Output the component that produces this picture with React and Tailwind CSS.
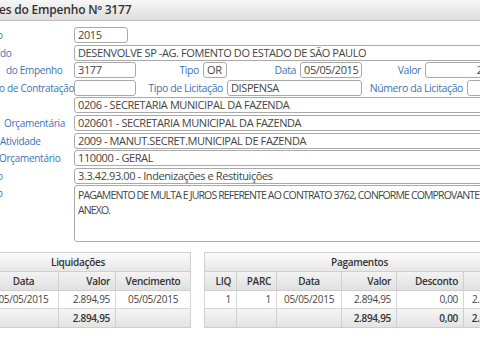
import React from "react";

const Campo = ({ w, children, right, className = "" }) => (
  <div
    className={`flex-none h-4 rounded-[3px] border border-[#a9a9a9] bg-white px-[3px] text-[11px] leading-[14px] tracking-[-0.4px] text-[#444] whitespace-nowrap overflow-hidden ${right ? "text-right" : ""} ${className}`}
    style={{ width: w }}
  >
    {children}
  </div>
);

const Rotulo = ({ w, children }) => (
  <div
    className="flex-none h-4 text-right text-[10.5px] leading-4 tracking-[-0.4px] text-[#3d74b5] whitespace-nowrap pr-[4px]"
    style={{ width: w }}
  >
    {children}
  </div>
);

const Linha = ({ label, children, shift = 0 }) => (
  <div className="flex h-4 items-start">
    <div className="w-[74px] flex-none overflow-hidden text-[10px] leading-4 tracking-[-0.3px] text-[#3d74b5] whitespace-nowrap">
      <span style={{ marginLeft: shift }}>{label}</span>
    </div>
    {children}
  </div>
);

const th = "border border-[#cfcfcf] px-[5px] font-semibold text-[#333]";
const td = "border border-[#d6d6d6] px-[5px] text-[#444]";

export default function App() {
  return (
    <div className="w-[480px] h-[340px] overflow-hidden bg-white font-['Open_Sans',sans-serif]">
      {/* titulo */}
      <div className="h-[21px] border-b border-[#bdbdbd] bg-gradient-to-b from-[#f7f7f7] to-[#dedede] flex items-center">
        <span className="-ml-[1px] text-[12px] font-semibold tracking-[-0.2px] text-[#333] whitespace-nowrap">es do Empenho Nº 3177</span>
      </div>

      <div className="pt-[6px] flex flex-col gap-[1.6px]">
        <Linha label="o" shift={-3}>
          <Campo w={54}>2015</Campo>
        </Linha>
        <Linha label="do">
          <Campo w={480}>DESENVOLVE SP -AG. FOMENTO DO ESTADO DE SÃO PAULO</Campo>
        </Linha>
        <Linha label="do Empenho" shift={6}>
          <Campo w={62}>3177</Campo>
          <Rotulo w={67}>Tipo</Rotulo>
          <Campo w={24}>OR</Campo>
          <Rotulo w={73}>Data</Rotulo>
          <Campo w={62}>05/05/2015</Campo>
          <Rotulo w={63}>Valor</Rotulo>
          <Campo w={96} right>2.894,95</Campo>
        </Linha>
        <Linha label="o de Contratação" shift={-1}>
          <Campo w={62}></Campo>
          <Rotulo w={91}>Tipo de Licitação</Rotulo>
          <Campo w={135}>DISPENSA</Campo>
          <Rotulo w={105}>Número da Licitação</Rotulo>
          <Campo w={60}></Campo>
        </Linha>
        <Linha label="">
          <Campo w={480}>0206 - SECRETARIA MUNICIPAL DA FAZENDA</Campo>
        </Linha>
        <Linha label="Orçamentária" shift={4}>
          <Campo w={480}>020601 - SECRETARIA MUNICIPAL DA FAZENDA</Campo>
        </Linha>
        <Linha label="Atividade">
          <Campo w={480}>2009 - MANUT.SECRET.MUNICIPAL DE FAZENDA</Campo>
        </Linha>
        <Linha label="Orçamentário" shift={-1}>
          <Campo w={480}>110000 - GERAL</Campo>
        </Linha>
        <Linha label="o" shift={-3}>
          <Campo w={480}>3.3.42.93.00 - Indenizações e Restituições</Campo>
        </Linha>
        <div className="flex items-start">
          <div className="w-[74px] flex-none overflow-hidden text-[10px] leading-4 text-[#3d74b5]">
            <span className="-ml-[3px]">o</span>
          </div>
          <div className="flex-none w-[480px] h-[57px] rounded-[3px] border border-[#a9a9a9] px-[3px] pt-[2px] text-[10.5px] leading-[15px] tracking-[-0.85px] text-[#444] whitespace-nowrap">
            PAGAMENTO DE MULTA E JUROS REFERENTE AO CONTRATO 3762, CONFORME COMPROVANTE
            <br />
            ANEXO.
          </div>
        </div>
      </div>

      {/* tabelas */}
      <div className="mt-[10px] flex items-start text-[10px] tracking-[-0.3px]">
        <table className="flex-none -ml-[35px] w-[225px] table-fixed border-collapse bg-white">
          <colgroup>
            <col className="w-[23px]" />
            <col className="w-[70px]" />
            <col className="w-[57px]" />
            <col className="w-[75px]" />
          </colgroup>
          <thead>
            <tr className="h-[19px] bg-gradient-to-b from-[#fbfbfb] to-[#e6e6e6]">
              <th colSpan={4} className={`${th} text-center`}>Liquidações</th>
            </tr>
            <tr className="h-[19px] bg-gradient-to-b from-[#f3f3f3] to-[#dfdfdf]">
              <th className={`${th} text-center`}>Nº</th>
              <th className={`${th} text-center`}>Data</th>
              <th className={`${th} text-right`}>Valor</th>
              <th className={`${th} text-center`}>Vencimento</th>
            </tr>
          </thead>
          <tbody>
            <tr className="h-[18px]">
              <td className={`${td} text-right`}>1</td>
              <td className={`${td} text-center`}>05/05/2015</td>
              <td className={`${td} text-right`}>2.894,95</td>
              <td className={`${td} text-center`}>05/05/2015</td>
            </tr>
            <tr className="h-[19px] bg-gradient-to-b from-[#f5f5f5] to-[#e2e2e2]">
              <td className={`${th}`}></td>
              <td className={`${th}`}></td>
              <td className={`${th} text-right`}>2.894,95</td>
              <td className={`${th}`}></td>
            </tr>
          </tbody>
        </table>

        <table className="flex-none ml-[13px] w-[310px] table-fixed border-collapse bg-white">
          <colgroup>
            <col className="w-[32px]" />
            <col className="w-[40px]" />
            <col className="w-[65px]" />
            <col className="w-[55px]" />
            <col className="w-[67px]" />
            <col className="w-[51px]" />
          </colgroup>
          <thead>
            <tr className="h-[19px] bg-gradient-to-b from-[#fbfbfb] to-[#e6e6e6]">
              <th colSpan={6} className={`${th} text-center`}>Pagamentos</th>
            </tr>
            <tr className="h-[19px] bg-gradient-to-b from-[#f3f3f3] to-[#dfdfdf]">
              <th className={`${th} text-right`}>LIQ</th>
              <th className={`${th} text-right`}>PARC</th>
              <th className={`${th} text-center`}>Data</th>
              <th className={`${th} text-right`}>Valor</th>
              <th className={`${th} text-right`}>Desconto</th>
              <th className={`${th} text-right`}>Pago</th>
            </tr>
          </thead>
          <tbody>
            <tr className="h-[18px]">
              <td className={`${td} text-right`}>1</td>
              <td className={`${td} text-right`}>1</td>
              <td className={`${td} text-center`}>05/05/2015</td>
              <td className={`${td} text-right`}>2.894,95</td>
              <td className={`${td} text-right`}>0,00</td>
              <td className={`${td} text-right`}>2.894,95</td>
            </tr>
            <tr className="h-[19px] bg-gradient-to-b from-[#f5f5f5] to-[#e2e2e2]">
              <td className={th}></td>
              <td className={th}></td>
              <td className={th}></td>
              <td className={`${th} text-right`}>2.894,95</td>
              <td className={`${th} text-right`}>0,00</td>
              <td className={`${th} text-right`}>2.894,95</td>
            </tr>
          </tbody>
        </table>
      </div>
    </div>
  );
}
